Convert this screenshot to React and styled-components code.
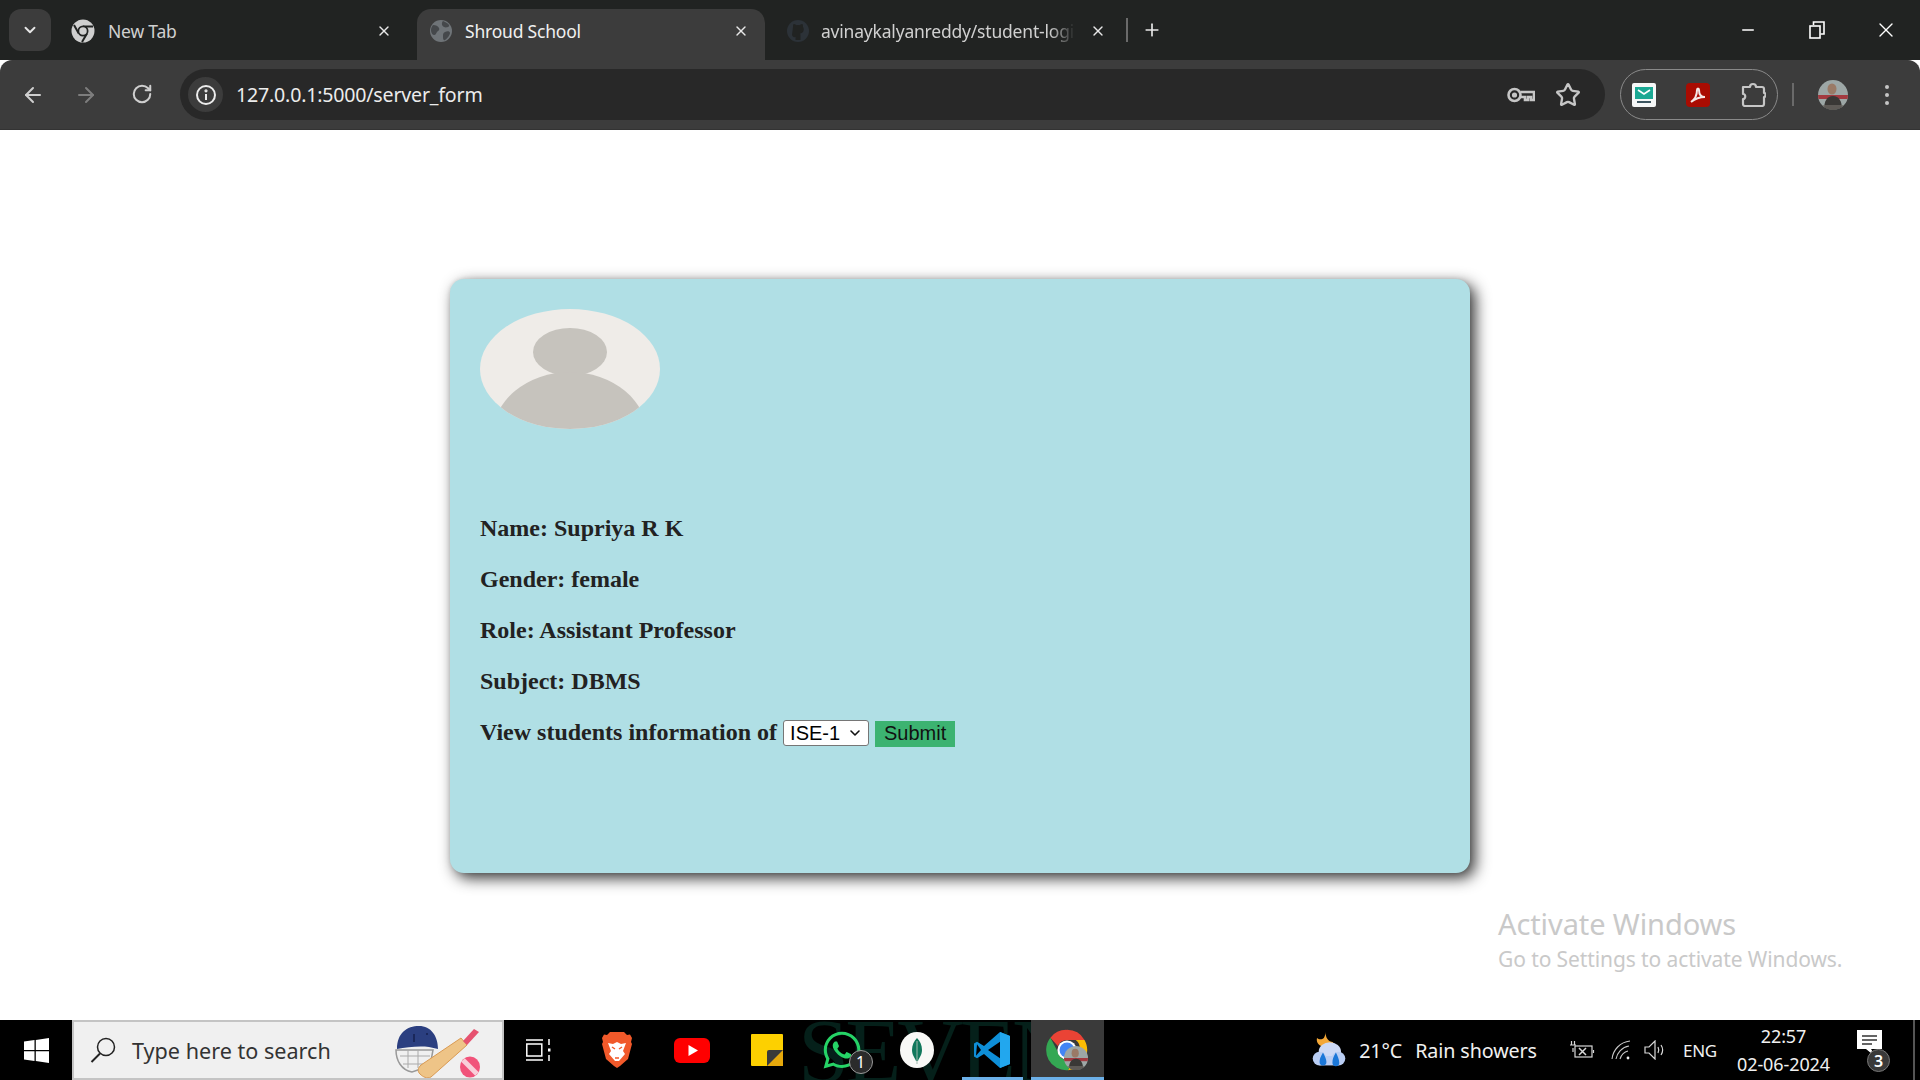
import React from "react";
import styled, { createGlobalStyle } from "styled-components";
import { ArrowLeft, ArrowRight, RotateCw, Star, X, Plus, ChevronDown, Minus } from "lucide-react";
import { FaWhatsapp } from "react-icons/fa";

const Global = createGlobalStyle`
  html, body { margin: 0; padding: 0; height: 100%; background: #fff; overflow: hidden; }
  #root { height: 100%; }
  * { box-sizing: border-box; }
`;

const uiFont = `"Noto Sans", "Open Sans", sans-serif`;

const Page = styled.div`
  width: 1920px; height: 1080px; display: flex; flex-direction: column; overflow: hidden;
  font-family: ${uiFont}; position: relative;
`;
const TabStrip = styled.div`
  height: 60px; background: #212322; display: flex; align-items: flex-end; padding-left: 9px; flex: none;
`;
const TabGroupButton = styled.div`
  width: 42px; height: 42px; margin-bottom: 9px; border-radius: 12px; background: #3c3c3c; color: #e6e6e6;
  display: flex; align-items: center; justify-content: center; flex: none;
`;
const Tab = styled.div`
  position: relative; height: 51px; width: ${p => p.$w}px; flex: none; display: flex; align-items: center;
  padding: 0 ${p => p.$pr}px 8px ${p => p.$pl}px; border-radius: 14px 14px 0 0;
  background: ${p => (p.$active ? "#3c3c3c" : "transparent")};
  color: ${p => (p.$active ? "#f0f0f0" : "#d0d0d0")}; font-size: 17.5px;
`;
const TabIcon = styled.span`width: 24px; height: 24px; flex: none; display: flex; align-items: center; justify-content: center; margin-right: ${p => p.$mr}px;`;
const TabTitle = styled.span`
  flex: 1; white-space: nowrap; overflow: hidden; letter-spacing: -0.2px;
  ${p => p.$fade && `margin-right: 13px; -webkit-mask-image: linear-gradient(90deg, #000 90%, transparent);`}
`;
const TabClose = styled.span`color: #e8e8e8; display: flex; flex: none; width: 20px; justify-content: center;`;
const StripSep = styled.div`width: 2px; height: 24px; background: #6a6a6a; margin: 0 14px 18px 14px; flex: none;`;
const NewTab = styled.div`color: #e8e8e8; display: flex; margin-bottom: 20px; flex: none;`;
const WindowControls = styled.div`margin-left: auto; display: flex; height: 60px; align-items: center; color: #fff; flex: none;`;
const WinButton = styled.div`width: 69px; height: 60px; display: flex; align-items: center; justify-content: center;`;

const Toolbar = styled.div`
  height: 70px; background: #3c3c3c; display: flex; align-items: center; flex: none; border-radius: 12px 12px 0 0;
  padding: 0 0 1px 0; box-shadow: inset 0 -1px 0 #333;
`;
const NavButton = styled.div`
  width: ${p => p.$w}px; display: flex; justify-content: center; color: ${p => (p.$dim ? "#7d7d7d" : "#cfcfcf")}; flex: none;
`;
const NavGroup = styled.div`display: flex; padding-left: 7px; padding-right: 9px; flex: none;`;
const Omnibox = styled.div`
  width: 1425px; height: 51px; border-radius: 26px; background: #282828; display: flex; align-items: center;
  padding: 0 24px 0 8px; flex: none;
`;
const SiteInfo = styled.div`
  width: 35px; height: 35px; border-radius: 50%; background: #3c3c3c; display: flex; align-items: center; justify-content: center; flex: none; margin-right: 13px;
`;
const Url = styled.div`
  color: #ececec; font-size: 19.6px; letter-spacing: -0.2px; flex: 1; white-space: nowrap;
`;
const OmniIcon = styled.div`display: flex; color: #c6c6c6; margin-left: ${p => p.$ml}px;`;
const ExtPill = styled.div`
  margin-left: 15px; width: 158px; height: 51px; border: 1.5px solid #8a8a8a; border-radius: 26px; display: flex;
  align-items: center; padding-left: 11px; flex: none;
`;
const ExtIcon = styled.div`display: flex; margin-right: ${p => p.$mr}px; flex: none;`;
const ToolbarSep = styled.div`width: 2px; height: 23px; background: #6a6a6a; margin-left: 14px; flex: none;`;
const ProfilePic = styled.div`margin-left: 24px; display: flex; flex: none;`;
const MenuDots = styled.div`
  margin-left: 37px; display: flex; flex-direction: column; gap: 4px; flex: none;
`;
const Dot = styled.span`width: 4px; height: 4px; border-radius: 50%; background: #c6c6c6;`;

const Content = styled.main`
  flex: 1; position: relative; display: flex; align-items: center; justify-content: center; background: #fff; padding-top: 2px;
`;
const Card = styled.section`
  width: 1020px; height: 594px; background: #b0dfe5; border-radius: 14px; padding: 30px;
  box-shadow: 5px 5px 15px #333, 0 0 4px rgba(0,0,0,.1); display: flex; flex-direction: column;
  font-family: "Liberation Serif", "Times New Roman", serif; color: #222;
`;
const Avatar = styled.svg`width: 180px; height: 120px; flex: none; margin-bottom: 86px; display: block;`;
const Field = styled.p`
  margin: 0 0 24px 0; font-size: 24px; font-weight: 700; line-height: 27px; display: flex; align-items: center;
`;
const PickerWrap = styled.span`
  position: relative; margin-left: 6px; width: 86px; height: 26px; display: block; color: #111; flex: none;
`;
const Picker = styled.select`
  appearance: none; width: 100%; height: 100%; display: block; font: 20px "Liberation Sans", Arial, sans-serif; background: #fff; color: #000;
  border: 1px solid #767676; border-radius: 3px; padding: 0 0 0 6px;
`;
const PickerArrow = styled.span`
  position: absolute; right: 6px; top: 5px; display: flex; pointer-events: none;
`;
const Submit = styled.button`
  margin-left: 6px; width: 80px; height: 26px; background: #3cb371; border: none; color: #111; padding: 0;
  font: 20px "Liberation Sans", Arial, sans-serif; position: relative; top: 1px;
`;
const Watermark = styled.div`
  position: absolute; left: 1498px; top: 904px; color: #c9c9c9; font-size: 29px; line-height: 40px; letter-spacing: -0.1px; white-space: nowrap;
`;
const WatermarkSub = styled.div`font-size: 21px; line-height: 30px; letter-spacing: -0.1px;`;

const Taskbar = styled.footer`
  height: 60px; background: #000; display: flex; align-items: stretch; position: relative; overflow: hidden; flex: none; color: #f0f0f0;
`;
const Wallpaper = styled.div`
  position: absolute; left: 798px; top: -14px; font-family: "Liberation Serif", serif; font-size: 92px; line-height: 90px; color: #05201a;
  letter-spacing: -4px; white-space: nowrap;
`;
const StartButton = styled.div`width: 72px; display: flex; align-items: center; justify-content: center; flex: none; position: relative;`;
const SearchBox = styled.div`
  width: 432px; background: #f0f0f0; border: 2px solid #c4c4c4; display: flex; align-items: center; padding-left: 16px; flex: none; position: relative;
  color: #333; font-size: 21.6px; margin-right: 4.5px;
`;
const SearchText = styled.span`margin-left: 16px; white-space: nowrap;`;
const SearchArt = styled.div`position: absolute; left: 320px; top: 0; display: flex;`;
const AppRow = styled.div`display: flex; gap: 14px; position: relative; flex: none;`;
const AppSlot = styled.div`
  position: relative; width: ${p => (p.$focus ? 73 : 61)}px; margin: 0 ${p => (p.$focus ? -6 : 0)}px 0 ${p => (p.$focus ? -6 : 0)}px;
  margin-right: ${p => (p.$extra ? 3 : p.$focus ? -6 : 0)}px;
  display: flex; align-items: center; justify-content: center; background: ${p => (p.$focus ? "#3a3a3a" : "transparent")};
  ${p => p.$open && `&::after { content: ""; position: absolute; left: 0; right: 0; bottom: 0; height: 3px; background: #6cb0e8; }`}
`;
const CountBadge = styled.span`
  position: absolute; left: 37px; top: 30px; width: 24px; height: 24px; border-radius: 50%; background: #2b2b2b; border: 1px solid #999;
  color: #fff; font-size: 16px; display: flex; align-items: center; justify-content: center; line-height: 1;
`;
const ChromeBadge = styled.span`
  position: absolute; left: 33px; top: 26px; display: flex;
`;
const Tray = styled.div`margin-left: auto; display: flex; align-items: center; position: relative; flex: none; padding-right: 13px;`;
const WeatherIcon = styled.div`display: flex; margin-right: 11px; margin-left: -2px;`;
const WeatherText = styled.span`font-size: 19.7px; white-space: nowrap; margin-right: ${p => p.$mr}px; letter-spacing: -0.1px;`;
const TrayIcon = styled.div`display: flex; margin-right: ${p => p.$mr}px; color: #ddd; flex: none;`;
const Lang = styled.span`font-size: 17px; margin-right: 20px; letter-spacing: -0.2px;`;
const Clock = styled.div`
  display: flex; flex-direction: column; align-items: center; font-size: 18px; line-height: 28px; margin-right: 27px; letter-spacing: -0.1px;
`;
const Notice = styled.div`position: relative; width: 36px; height: 40px; display: flex; align-items: flex-start; margin-right: 7px;`;
const NoticeBadge = styled.span`
  position: absolute; left: 10px; top: 19px; width: 23px; height: 23px; border-radius: 50%; background: #3a3a3a; border: 1px solid #777; color: #fff;
  font-size: 16px; font-weight: 600; display: flex; align-items: center; justify-content: center; line-height: 1;
`;
const EdgeLine = styled.div`width: 2px; background: #555; flex: none; margin-right: 5px;`;

const ChromeLogo = ({ size = 24, muted }) => (
  <svg width={size} height={size} viewBox="0 0 48 48">
    {muted ? (
      <>
        <circle cx="24" cy="24" r="23" fill="#cfcfcf" />
        <path d="M24 15h20M15.5 29 6 12M32 29 22 46" stroke="#212322" strokeWidth="4" />
        <circle cx="24" cy="24" r="11" fill="#212322" />
        <circle cx="24" cy="24" r="7.5" fill="#cfcfcf" />
      </>
    ) : (
      <>
        <path d="M24 1a23 23 0 0 1 20 11.5H24a11.500 11.500 0 0 0-10.500 7L5 10A23 23 0 0 1 24 1Z" fill="#ea4335" />
        <path d="M44 12.500A23 23 0 0 1 25 47l10-17a11.500 11.500 0 0 0-1-17.500Z" fill="#fbbc04" />
        <path d="M25 47A23 23 0 0 1 5 10l9 17a11.500 11.500 0 0 0 21 3Z" fill="#34a853" />
        <circle cx="24" cy="24" r="11" fill="#fff" />
        <circle cx="24" cy="24" r="8.500" fill="#4285f4" />
      </>
    )}
  </svg>
);

const GlobeMuted = () => (
  <svg width="24" height="24" viewBox="0 0 24 24">
    <circle cx="12" cy="12" r="11" fill="#6f7478" />
    <path d="M4 6c3 0 5 1 6 3s-1 3-2 4-1 3-3 3-3-3-3-5 1-4 2-5Zm10-4c2 1 5 2 6 4s-3 3-5 2-3-4-1-6Zm2 11c2-1 5-1 5 1s-3 6-5 7-2-2-2-4 0-3 2-4Z" fill="#45484b" />
  </svg>
);

const GithubFaint = () => (
  <svg width="24" height="24" viewBox="0 0 24 24">
    <circle cx="12" cy="12" r="11" fill="#2c3238" />
    <path d="M7 8c0-1 0-2 .5-3 1 0 2 .5 3 1.200a6 6 0 0 1 3 0C14.500 5.500 15.500 5 16.500 5c.5 1 .5 2 .5 3 1 1 1.200 4-.5 5.500-1 .8-2 1-2.500 1 .5.5.5 1.500.5 3v3.500h-5V18c-2 .5-3-.5-3.500-2" fill="#212322" />
  </svg>
);

const InfoIcon = () => (
  <svg width="22" height="22" viewBox="0 0 22 22" fill="none" stroke="#ececec" strokeWidth="2">
    <circle cx="11" cy="11" r="9" />
    <path d="M11 10v6" />
    <circle cx="11" cy="6.800" r=".6" fill="#ececec" />
  </svg>
);

const KeyIcon = () => (
  <svg width="28" height="16" viewBox="0 0 28 16" fill="none" stroke="#c6c6c6" strokeWidth="2.600">
    <circle cx="7.500" cy="8" r="6" />
    <circle cx="7.500" cy="8" r="1.300" />
    <path d="M13.500 5H27v8h-3v-3h-3v3h-3v-3h-4.500" />
  </svg>
);

const TempMail = () => (
  <svg width="24" height="24" viewBox="0 0 24 24">
    <rect width="24" height="24" rx="2" fill="#f6f7f7" />
    <rect x="3" y="4" width="18" height="12" fill="#1aa893" />
    <path d="M6 7l6 4 6-4" fill="none" stroke="#fff" strokeWidth="1.600" />
    <rect x="5" y="18" width="14" height="2" fill="#3c5560" />
  </svg>
);

const PdfIcon = () => (
  <svg width="24" height="24" viewBox="0 0 24 24">
    <rect width="24" height="24" rx="4" fill="#a90c02" />
    <path d="M5 19c3-2 6-6 6-12 0-2 2-2 2 0 0 4 2 7 6 7-5 0-9 1-14 5Z" fill="none" stroke="#f4e8e6" strokeWidth="2" />
  </svg>
);

const PuzzleIcon = () => (
  <svg width="25" height="25" viewBox="0 0 25 25" fill="none" stroke="#c6c6c6" strokeWidth="2.200" strokeLinejoin="round">
    <path d="M2 5h7c0-4 6-4 6 0h6a2 2 0 0 1 2 2v4c2-.5 2 4 0 4v7a2 2 0 0 1-2 2H4a2 2 0 0 1-2-2v-5c3 0 3-5 0-5V7Z" />
  </svg>
);

const ProfileIcon = ({ size = 30 }) => (
  <svg width={size} height={size} viewBox="0 0 30 30">
    <defs><clipPath id={`pc${size}`}><circle cx="15" cy="15" r="15" /></clipPath></defs>
    <g clipPath={`url(#pc${size})`}>
      <rect width="30" height="30" fill="#9da7a6" />
      <rect y="15" width="30" height="4" fill="#a33a40" />
      <path d="M6 30c0-9 3-14 9-14s9 5 9 14Z" fill="#3a3836" />
      <ellipse cx="14" cy="9" rx="4.500" ry="5.500" fill="#9a7a66" />
      <rect y="25" width="30" height="5" fill="#6e6a64" opacity=".7" />
    </g>
  </svg>
);

const RestoreIcon = () => (
  <svg width="16" height="18" viewBox="0 0 16 18" fill="none" stroke="#fff" strokeWidth="1.600">
    <rect x="1" y="5" width="10" height="12" />
    <path d="M4.500 4V1H15v12h-3.500" />
  </svg>
);

const WinLogo = () => (
  <svg width="25" height="25" viewBox="0 0 25 25" fill="#fff">
    <path d="M0 3.500l10.500-1.400v9.900H0ZM11.800 1.900 25 0v12H11.800ZM0 13.200h10.500v9.800L0 21.500ZM11.800 13.200H25V25l-13.200-1.900Z" />
  </svg>
);

const SearchGlass = () => (
  <svg width="26" height="26" viewBox="0 0 26 26" fill="none" stroke="#222" strokeWidth="1.500">
    <circle cx="16" cy="10" r="8.500" />
    <path d="M10 16.500 1.500 25" strokeWidth="2" />
  </svg>
);

const CricketArt = () => (
  <svg width="96" height="56" viewBox="0 0 96 56">
    <path d="M2 28c0 10 5 20 16 22l18-6 3-16Z" fill="none" stroke="#999" strokeWidth="1.500" />
    <path d="M6 34h30M9 42h24M14 28v18M24 28v18" stroke="#aaa" strokeWidth="1" />
    <path d="M3 27C3 11 13 4 25 4s19 10 19 23l-9-2c-10-1-22 0-32 2Z" fill="#2b3f80" />
    <path d="M20 12v8M33 11v2" stroke="#16214d" strokeWidth="1.500" />
    <path d="M26 52c-3-3-2-6 1-9l40-27 6 7-36 32c-4 2-8 0-11-3Z" fill="#eec487" stroke="#d99a52" strokeWidth="1" />
    <path d="M69 19l11-12 5 3-12 13Z" fill="#e65270" />
    <ellipse cx="76" cy="45" rx="10" ry="10.500" fill="#f1537a" />
    <path d="M69 38l14 14" stroke="#f8cfd9" strokeWidth="5" />
  </svg>
);

const TaskViewIcon = () => (
  <svg width="26" height="24" viewBox="0 0 26 24" fill="none" stroke="#fff" strokeWidth="1.500">
    <rect x=".8" y="6" width="15" height="12" />
    <path d="M0 2h17M0 22h17" />
    <path d="M23 1v6M23 17v6" />
    <rect x="22" y="10.500" width="2.500" height="3" fill="#fff" stroke="none" />
  </svg>
);

const BraveIcon = () => (
  <svg width="30" height="36" viewBox="0 0 30 36">
    <path d="M8 0h14l3 3 3-.5L30 6l-1 4 1 2-4 15-8 7-3 2-3-2-8-7-4-15 1-2-1-4 2-3.500L5 3Z" fill="#f1592a" />
    <path d="M6 11l5 1 4-2 4 2 5-1-3 8 2 3-6 7h-4l-6-7 2-3Z" fill="#fff" />
    <path d="M10 15l3 2M20 15l-3 2M13 26h4" stroke="#f1592a" strokeWidth="1.500" />
  </svg>
);

const YouTubeIcon = () => (
  <svg width="36" height="25" viewBox="0 0 36 25">
    <rect width="36" height="25" rx="6" fill="#f00" />
    <path d="M14.500 7v11l9.500-5.500Z" fill="#fff" />
  </svg>
);

const StickyIcon = () => (
  <svg width="32" height="32" viewBox="0 0 32 32">
    <rect width="32" height="32" rx="1" fill="#fdd000" />
    <path d="M16 32V18a2 2 0 0 1 2-2h14v16Z" fill="#3a3a3a" />
    <path d="M16 32l16-16v16Z" fill="#e6a90c" />
  </svg>
);

const MongoIcon = () => (
  <svg width="34" height="36" viewBox="0 0 34 36">
    <ellipse cx="17" cy="18" rx="17" ry="18" fill="#f8f8f6" />
    <path d="M17 6c3 3 5 7 5 12s-3 8-4 11h-2c-1-3-4-6-4-11s2-9 5-12Z" fill="#11785c" />
    <path d="M17 9v23" stroke="#9fb8ad" strokeWidth="1" />
  </svg>
);

const VSCodeIcon = () => (
  <svg width="36" height="36" viewBox="0 0 36 44" preserveAspectRatio="none">
    <path d="M26 0l10 5v34l-10 5-16-17-7 5-3-2V14l3-2 7 5Z" fill="#0e8fd8" />
    <path d="M26 0l10 5v34l-10 5Z" fill="#22a7ee" />
    <path d="M26 12 14 22l12 10Z" fill="#000" />
    <path d="M3 15l-1 14 5-7Z" fill="#000" />
  </svg>
);

const WeatherArt = () => (
  <svg width="38" height="36" viewBox="0 0 38 42">
    <path d="M15 0c0 7 3 11 9 12-3 5-8 7-13 5C6 15 4 11 5 7c2 2 6 2 8 0 1-2 2-4 2-7Z" fill="#f3a737" />
    <ellipse cx="20" cy="23" rx="13" ry="11" fill="#cdd9f5" />
    <circle cx="8" cy="31" r="8" fill="#b9cdf3" />
    <circle cx="30" cy="31" r="8" fill="#b9cdf3" />
    <rect x="8" y="28" width="22" height="11" fill="#b9cdf3" />
    <path d="M12 24c-3 5-4 8-4 11a4 4 0 0 0 8 0c0-3-2-7-4-11ZM27 24c-3 5-4 8-4 12a4 4 0 0 0 8 0c0-4-2-8-4-12Z" fill="#1b77d8" />
  </svg>
);

const BatteryIcon = () => (
  <svg width="26" height="20" viewBox="0 0 26 20" fill="none" stroke="#d8d8d8" strokeWidth="1.200">
    <rect x="6" y="6" width="17" height="11" />
    <path d="M24.500 10v3" />
    <path d="M1 5h6M2.500 1v4M5.500 1v4M4 8v4" />
    <path d="M10 8l7 7M17 8l-7 7" strokeWidth="1.500" />
  </svg>
);

const WifiIcon = () => (
  <svg width="20" height="20" viewBox="0 0 20 20" fill="none" stroke="#c8c8c8" strokeWidth="1.100">
    <path d="M1 19C2 10 9 2 19 1M5 19c1-6 6-12 13-13M9 19c1-3 3-7 8-8" />
    <circle cx="17" cy="18" r="1.400" fill="#eee" stroke="none" />
  </svg>
);

const VolumeIcon = () => (
  <svg width="22" height="20" viewBox="0 0 22 20" fill="none" stroke="#d8d8d8" strokeWidth="1.200">
    <path d="M1 7h4l6-6v18l-6-6H1Z" />
    <path d="M14 7c1 2 1 4 0 6M17 5c2 3 2 7 0 10" />
  </svg>
);

const NoticeIcon = () => (
  <svg width="25" height="29" viewBox="0 0 25 29" fill="#fff">
    <path d="M0 0h25v19H14l6 9-11-9H0Z" />
    <path d="M5 6h15M5 10h15M5 14h10" stroke="#333" strokeWidth="1.300" />
  </svg>
);

const fields = ["Name: Supriya R K", "Gender: female", "Role: Assistant Professor", "Subject: DBMS"];

export default function App() {
  return (
    <Page>
      <Global />
      <TabStrip>
        <TabGroupButton><ChevronDown size={18} strokeWidth={2.5} /></TabGroupButton>
        <Tab $w={366} $pl={20} $pr={23}>
          <TabIcon $mr={13}><ChromeLogo muted /></TabIcon>
          <TabTitle>New Tab</TabTitle>
          <TabClose><X size={16} strokeWidth={2} /></TabClose>
        </Tab>
        <Tab $w={348} $pl={12} $pr={14} $active>
          <TabIcon $mr={12}><GlobeMuted /></TabIcon>
          <TabTitle>Shroud School</TabTitle>
          <TabClose><X size={16} strokeWidth={2} /></TabClose>
        </Tab>
        <Tab $w={347} $pl={21} $pr={4}>
          <TabIcon $mr={11}><GithubFaint /></TabIcon>
          <TabTitle $fade>avinaykalyanreddy/student-login</TabTitle>
          <TabClose><X size={16} strokeWidth={2} /></TabClose>
        </Tab>
        <StripSep />
        <NewTab><Plus size={20} strokeWidth={2} /></NewTab>
        <WindowControls>
          <WinButton><Minus size={18} strokeWidth={2} /></WinButton>
          <WinButton><RestoreIcon /></WinButton>
          <WinButton><X size={24} strokeWidth={1.4} /></WinButton>
        </WindowControls>
      </TabStrip>
      <Toolbar>
        <NavGroup>
          <NavButton $w={52}><ArrowLeft size={24} strokeWidth={2} /></NavButton>
          <NavButton $w={54} $dim><ArrowRight size={24} strokeWidth={2} /></NavButton>
          <NavButton $w={58}><RotateCw size={22} strokeWidth={2.2} /></NavButton>
        </NavGroup>
        <Omnibox>
          <SiteInfo><InfoIcon /></SiteInfo>
          <Url>127.0.0.1:5000/server_form</Url>
          <OmniIcon $ml={0}><KeyIcon /></OmniIcon>
          <OmniIcon $ml={20}><Star size={26} strokeWidth={2.2} /></OmniIcon>
        </Omnibox>
        <ExtPill>
          <ExtIcon $mr={30}><TempMail /></ExtIcon>
          <ExtIcon $mr={31}><PdfIcon /></ExtIcon>
          <ExtIcon $mr={0}><PuzzleIcon /></ExtIcon>
        </ExtPill>
        <ToolbarSep />
        <ProfilePic><ProfileIcon /></ProfilePic>
        <MenuDots>
          <Dot /><Dot /><Dot />
        </MenuDots>
      </Toolbar>
      <Content>
        <Card>
          <Avatar viewBox="0 0 180 120">
            <defs><clipPath id="face"><ellipse cx="90" cy="60" rx="90" ry="60" /></clipPath></defs>
            <ellipse cx="90" cy="60" rx="90" ry="60" fill="#efece8" />
            <g clipPath="url(#face)" fill="#c6c3bd">
              <ellipse cx="90" cy="43" rx="37" ry="24" />
              <ellipse cx="90" cy="128" rx="78" ry="65" />
            </g>
          </Avatar>
          {fields.map(text => <Field key={text}>{text}</Field>)}
          <Field>
            View students information of
            <PickerWrap>
              <Picker defaultValue="ISE-1" aria-label="Section">
                <option>ISE-1</option>
                <option>ISE-2</option>
              </Picker>
              <PickerArrow><ChevronDown size={16} strokeWidth={2.4} /></PickerArrow>
            </PickerWrap>
            <Submit type="button">Submit</Submit>
          </Field>
        </Card>
      </Content>
      <Watermark>
        Activate Windows
        <WatermarkSub>Go to Settings to activate Windows.</WatermarkSub>
      </Watermark>
      <Taskbar>
        <Wallpaper>SEVEN</Wallpaper>
        <StartButton><WinLogo /></StartButton>
        <SearchBox>
          <SearchGlass />
          <SearchText>Type here to search</SearchText>
          <SearchArt><CricketArt /></SearchArt>
        </SearchBox>
        <AppRow>
          <AppSlot $extra><TaskViewIcon /></AppSlot>
          <AppSlot><BraveIcon /></AppSlot>
          <AppSlot><YouTubeIcon /></AppSlot>
          <AppSlot><StickyIcon /></AppSlot>
          <AppSlot>
            <FaWhatsapp size={42} color="#25d366" />
            <CountBadge>1</CountBadge>
          </AppSlot>
          <AppSlot><MongoIcon /></AppSlot>
          <AppSlot $open><VSCodeIcon /></AppSlot>
          <AppSlot $open $focus>
            <ChromeLogo size={42} />
            <ChromeBadge><ProfileIcon size={24} /></ChromeBadge>
          </AppSlot>
        </AppRow>
        <Tray>
          <WeatherIcon><WeatherArt /></WeatherIcon>
          <WeatherText $mr={13}>21°C</WeatherText>
          <WeatherText $mr={32}>Rain showers</WeatherText>
          <TrayIcon $mr={16}><BatteryIcon /></TrayIcon>
          <TrayIcon $mr={13}><WifiIcon /></TrayIcon>
          <TrayIcon $mr={17}><VolumeIcon /></TrayIcon>
          <Lang>ENG</Lang>
          <Clock><span>22:57</span><span>02-06-2024</span></Clock>
          <Notice>
            <NoticeIcon />
            <NoticeBadge>3</NoticeBadge>
          </Notice>
        </Tray>
        <EdgeLine />
      </Taskbar>
    </Page>
  );
}
